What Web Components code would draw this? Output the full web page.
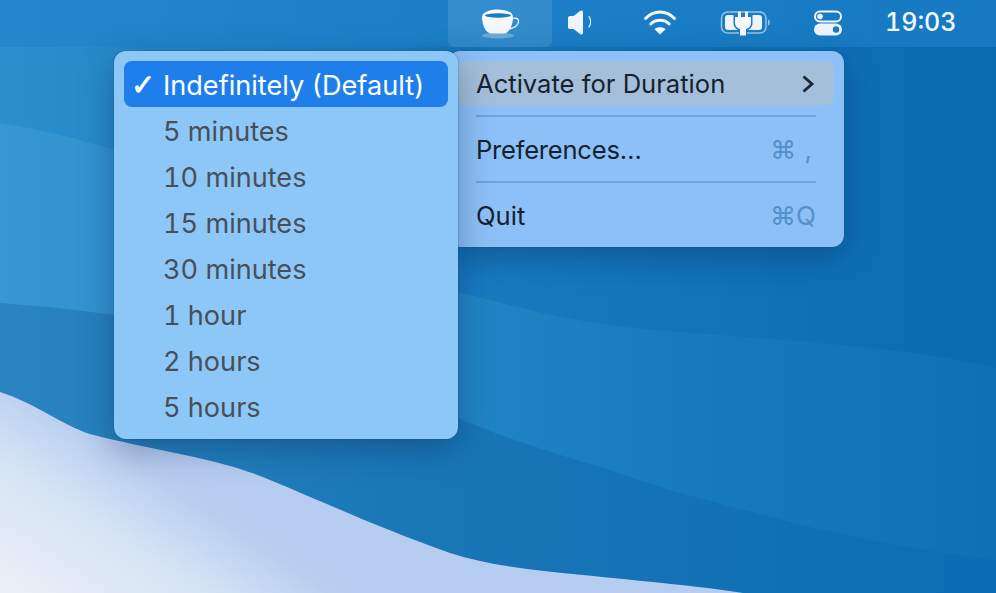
<!DOCTYPE html>
<html>
<head>
<meta charset="utf-8">
<style>
  html, body { margin: 0; height: 100%; overflow: hidden; }
  body { font-family: "Inter", "Liberation Sans", sans-serif; }
</style>
</head>
<body>
<desk-top>
  <menu-bar slot="bar">
    <bar-item active style="width:104px">
      <svg width="40" height="30" viewBox="0 0 40 30"><ellipse cx="18" cy="26.500" rx="16" ry="3" fill="#fff" opacity=".28"/><path d="M2 8C2 3 10 .5 17.500 .5S33 3 33 8C33 16 29 24.500 24 24.500H11C6 24.500 2 16 2 8Z" fill="#f4f8fc"/><ellipse cx="18" cy="6.500" rx="13" ry="2.200" fill="#1d7cc0"/><path d="M32.500 9.500c4-1.200 6.500 .5 6 3.500-.5 3.500-5 6-9 7" fill="none" stroke="#f4f8fc" stroke-width="1.300"/></svg>
    </bar-item>
    <bar-item style="width:56px">
      <svg width="40" height="30" viewBox="0 0 40 30"><path d="M10 7h3.500L20 2c1.300-1 3-.5 3 1.200v20.600c0 1.700-1.700 2.200-3 1.200l-6.500-5H10c-1.500 0-2-1-2-2V9c0-1 .5-2 2-2Z" fill="#eef4fa"/><path d="M29 7.500c2 3 2 7.500 0 10.500" fill="none" stroke="#eef4fa" stroke-width="1.300" stroke-linecap="round"/></svg>
    </bar-item>
    <bar-item style="width:104px">
      <svg width="40" height="30" viewBox="0 0 40 30"><path d="M5.500 9.500C13.500 .8 26.500 .8 34.500 9.500" fill="none" stroke="#f4f8fc" stroke-width="3" stroke-linecap="round"/><path d="M10.800 15c5-5 13.400-5 18.400 0" fill="none" stroke="#f4f8fc" stroke-width="3" stroke-linecap="round"/><path d="M20 25.500l-5.500-5.300c3-2.500 8-2.500 11 0Z" fill="#f4f8fc"/></svg>
    </bar-item>
    <bar-item style="width:64px">
      <svg width="56" height="30" viewBox="0 0 56 30"><rect x="5.500" y="3" width="44.500" height="21" rx="6" fill="none" stroke="#fff" stroke-opacity=".55" stroke-width="1.500"/><rect x="9" y="6" width="37" height="15" rx="3" fill="#eef4fa"/><path d="M52 10.500c2.500 .5 2.500 5.500 0 6Z" fill="#fff" opacity=".55"/><path d="M17.500 5h19v9c0 4-3 6.500-5.500 7.500v7h-8v-7c-2.500-1-5.500-3.500-5.500-7.500Z" fill="#1d7cc0"/><path d="M22 2.500h3V8h4V2.500h3V8h3v6c0 3-2.500 5.500-5 6v6.500h-6V20c-2.500-.5-5-3-5-6V8h3Z" fill="#f4f8fc"/></svg>
    </bar-item>
    <bar-item style="width:104px">
      <svg width="32" height="30" viewBox="0 0 32 30"><rect x="3" y="2.500" width="26" height="10" rx="5" fill="none" stroke="#f4f8fc" stroke-width="2"/><circle cx="8" cy="7.500" r="2.800" fill="#f4f8fc"/><rect x="2" y="14.500" width="28" height="12" rx="6" fill="#eef4fa"/><circle cx="24" cy="20.500" r="3.200" fill="#1d7cc0"/></svg>
    </bar-item>
    <span class="clock">19:03</span>
  </menu-bar>

  <menu-panel class="main" slot="main" style="--bg:#8cc0f6">
    <menu-row hover text="Activate for Duration">
      <svg slot="end" width="15" height="20" viewBox="0 0 15 20"><path d="M2.500 2.500l8.500 7.500-8.500 7.500" fill="none" stroke="#1c2530" stroke-width="2.800"/></svg>
    </menu-row>
    <menu-sep></menu-sep>
    <menu-row text="Preferences…" style="--ls:-.25px"><menu-key slot="end" style="word-spacing:1px;margin-right:4px">⌘ ,</menu-key></menu-row>
    <menu-sep></menu-sep>
    <menu-row text="Quit"><menu-key slot="end">⌘Q</menu-key></menu-row>
  </menu-panel>

  <menu-panel class="sub" slot="sub" style="--bg:#8dc7f7">
    <menu-option selected>Indefinitely (Default)</menu-option>
    <menu-option>5 minutes</menu-option>
    <menu-option>10 minutes</menu-option>
    <menu-option>15 minutes</menu-option>
    <menu-option>30 minutes</menu-option>
    <menu-option>1 hour</menu-option>
    <menu-option>2 hours</menu-option>
    <menu-option>5 hours</menu-option>
  </menu-panel>
</desk-top>

<script>
class DeskTop extends HTMLElement {
  constructor() {
    super();
    this.attachShadow({ mode: 'open' });
    this.shadowRoot.innerHTML = `
      <style>
        :host { display: block; position: relative; width: 996px; height: 593px; overflow: hidden; background: #0f72b4; }
        .wall { position: absolute; left: 0; top: 0; }
        ::slotted([slot=main]) { position: absolute; left: 448px; top: 51px; width: 396px; }
        ::slotted([slot=sub]) { position: absolute; left: 114px; top: 51px; width: 344px; }
      </style>
      <svg class="wall" width="996" height="593" viewBox="0 0 996 593">
        <defs>
          <linearGradient id="g0" x1="0" y1="0" x2="1" y2="0"><stop offset="0" stop-color="#2b8fcd"/><stop offset=".46" stop-color="#187bc0"/><stop offset="1" stop-color="#0a6bb1"/></linearGradient>
          <linearGradient id="g1" x1="0" y1="0" x2="1" y2="0"><stop offset="0" stop-color="#3697d2"/><stop offset=".46" stop-color="#2285c4"/><stop offset=".62" stop-color="#1a7dbf"/><stop offset=".85" stop-color="#1275ba"/><stop offset="1" stop-color="#0f70b6"/></linearGradient>
          <linearGradient id="g2" x1="0" y1="0" x2="1" y2="0"><stop offset="0" stop-color="#2a84bf"/><stop offset=".5" stop-color="#1775b5"/><stop offset="1" stop-color="#0b6db4"/></linearGradient>
          <linearGradient id="g3" gradientUnits="userSpaceOnUse" x1="0" y1="600" x2="130" y2="400"><stop offset="0" stop-color="#edf1f8"/><stop offset=".5" stop-color="#d5e4f4"/><stop offset=".8" stop-color="#b8cdf0"/><stop offset="1" stop-color="#b6ccf1"/></linearGradient>
        </defs>
        <rect width="996" height="593" fill="url(#g0)"/>
        <path d="M0 123C45 130 85 141 114 150 220 190 340 262 458 292 520 308 560 319 610 325 670 333 730 335 783 340 860 347 930 352 996 368V593H0Z" fill="url(#g1)"/>
        <path d="M0 303C40 306 80 310 114 315 230 335 350 375 458 418 510 440 560 455 610 470 670 492 730 506 783 520 860 540 930 552 996 560V593H0Z" fill="url(#g2)"/>
        <path d="M0 392C35 403 62 425 90 434 150 450 220 458 270 480 330 505 380 528 450 553 490 566 540 571 583 575 640 581 700 586 743 593H0Z" fill="url(#g3)"/>
      </svg>
      <slot name="bar"></slot>
      <slot name="main"></slot>
      <slot name="sub"></slot>`;
  }
}

class MenuBar extends HTMLElement {
  constructor() {
    super();
    this.attachShadow({ mode: 'open' });
    this.shadowRoot.innerHTML = `
      <style>
        :host { display: flex; position: relative; align-items: center; height: 47px; padding-left: 448px; background: rgba(30, 130, 205, .62); color: #f4f8fc; }
        ::slotted(.clock) { font-size: 25px; font-weight: 450; margin: -3px 0 0 5px; font-feature-settings: "tnum"; }
      </style>
      <slot></slot>`;
  }
}

class BarItem extends HTMLElement {
  constructor() {
    super();
    this.attachShadow({ mode: 'open' });
    this.shadowRoot.innerHTML = `
      <style>
        :host { display: flex; align-items: center; justify-content: center; flex: none; height: 47px; border-radius: 0 0 6px 6px; }
        :host([active]) { background: rgba(255, 255, 255, .1); }
      </style>
      <slot></slot>`;
  }
}

class MenuPanel extends HTMLElement {
  constructor() {
    super();
    this.attachShadow({ mode: 'open' });
    this.shadowRoot.innerHTML = `
      <style>
        :host { display: block; box-sizing: border-box; padding: 10px; border-radius: 12px; background: var(--bg, #8dc3f7);
          box-shadow: 0 0 0 1px rgba(20, 70, 120, .18), 0 10px 34px rgba(0, 30, 70, .34); }
      </style>
      <slot></slot>`;
  }
}

class MenuRow extends HTMLElement {
  constructor() {
    super();
    this.attachShadow({ mode: 'open' });
    const text = this.getAttribute('text') || '';
    this.shadowRoot.innerHTML = `
      <style>
        :host { display: flex; align-items: center; justify-content: space-between; box-sizing: border-box; height: 44px; padding: 1px 18px 0; border-radius: 8px; font-size: 25.6px; font-weight: 420; color: #16222f; letter-spacing: var(--ls, 0); }
        :host([hover]) { background: rgba(190, 190, 190, .5); }
        ::slotted(svg) { display: block; }
      </style>
      <span>${text}</span><slot name="end"></slot>`;
  }
}

class MenuSep extends HTMLElement {
  constructor() {
    super();
    this.attachShadow({ mode: 'open' });
    this.shadowRoot.innerHTML = `
      <style>
        :host { display: block; height: 2px; margin: 10px 18px; background: #6ea3d6; }
      </style>`;
  }
}

class MenuKey extends HTMLElement {
  constructor() {
    super();
    this.attachShadow({ mode: 'open' });
    this.shadowRoot.innerHTML = `
      <style>
        :host { display: block; color: #5590c8; font-size: 26px; font-weight: 400; letter-spacing: 0; }
      </style>
      <slot></slot>`;
  }
}

class MenuOption extends HTMLElement {
  constructor() {
    super();
    this.attachShadow({ mode: 'open' });
    const tick = this.hasAttribute('selected') ? '✓' : '';
    this.shadowRoot.innerHTML = `
      <style>
        :host { display: flex; align-items: center; box-sizing: border-box; height: 46px; padding-top: 2px; border-radius: 8px; font-size: 27.1px; font-weight: 420; color: #47505a; font-feature-settings: "tnum"; }
        :host([selected]) { background: #1e7eea; color: #fff; }
        .tick { width: 39px; padding-left: 7px; box-sizing: border-box; font-family: "DejaVu Sans", sans-serif; font-weight: 700; font-size: 29px; line-height: 1; -webkit-text-stroke: .7px #fff; }
      </style>
      <span class="tick">${tick}</span><slot></slot>`;
  }
}

customElements.define('desk-top', DeskTop);
customElements.define('menu-bar', MenuBar);
customElements.define('bar-item', BarItem);
customElements.define('menu-panel', MenuPanel);
customElements.define('menu-row', MenuRow);
customElements.define('menu-sep', MenuSep);
customElements.define('menu-key', MenuKey);
customElements.define('menu-option', MenuOption);
</script>
</body>
</html>
